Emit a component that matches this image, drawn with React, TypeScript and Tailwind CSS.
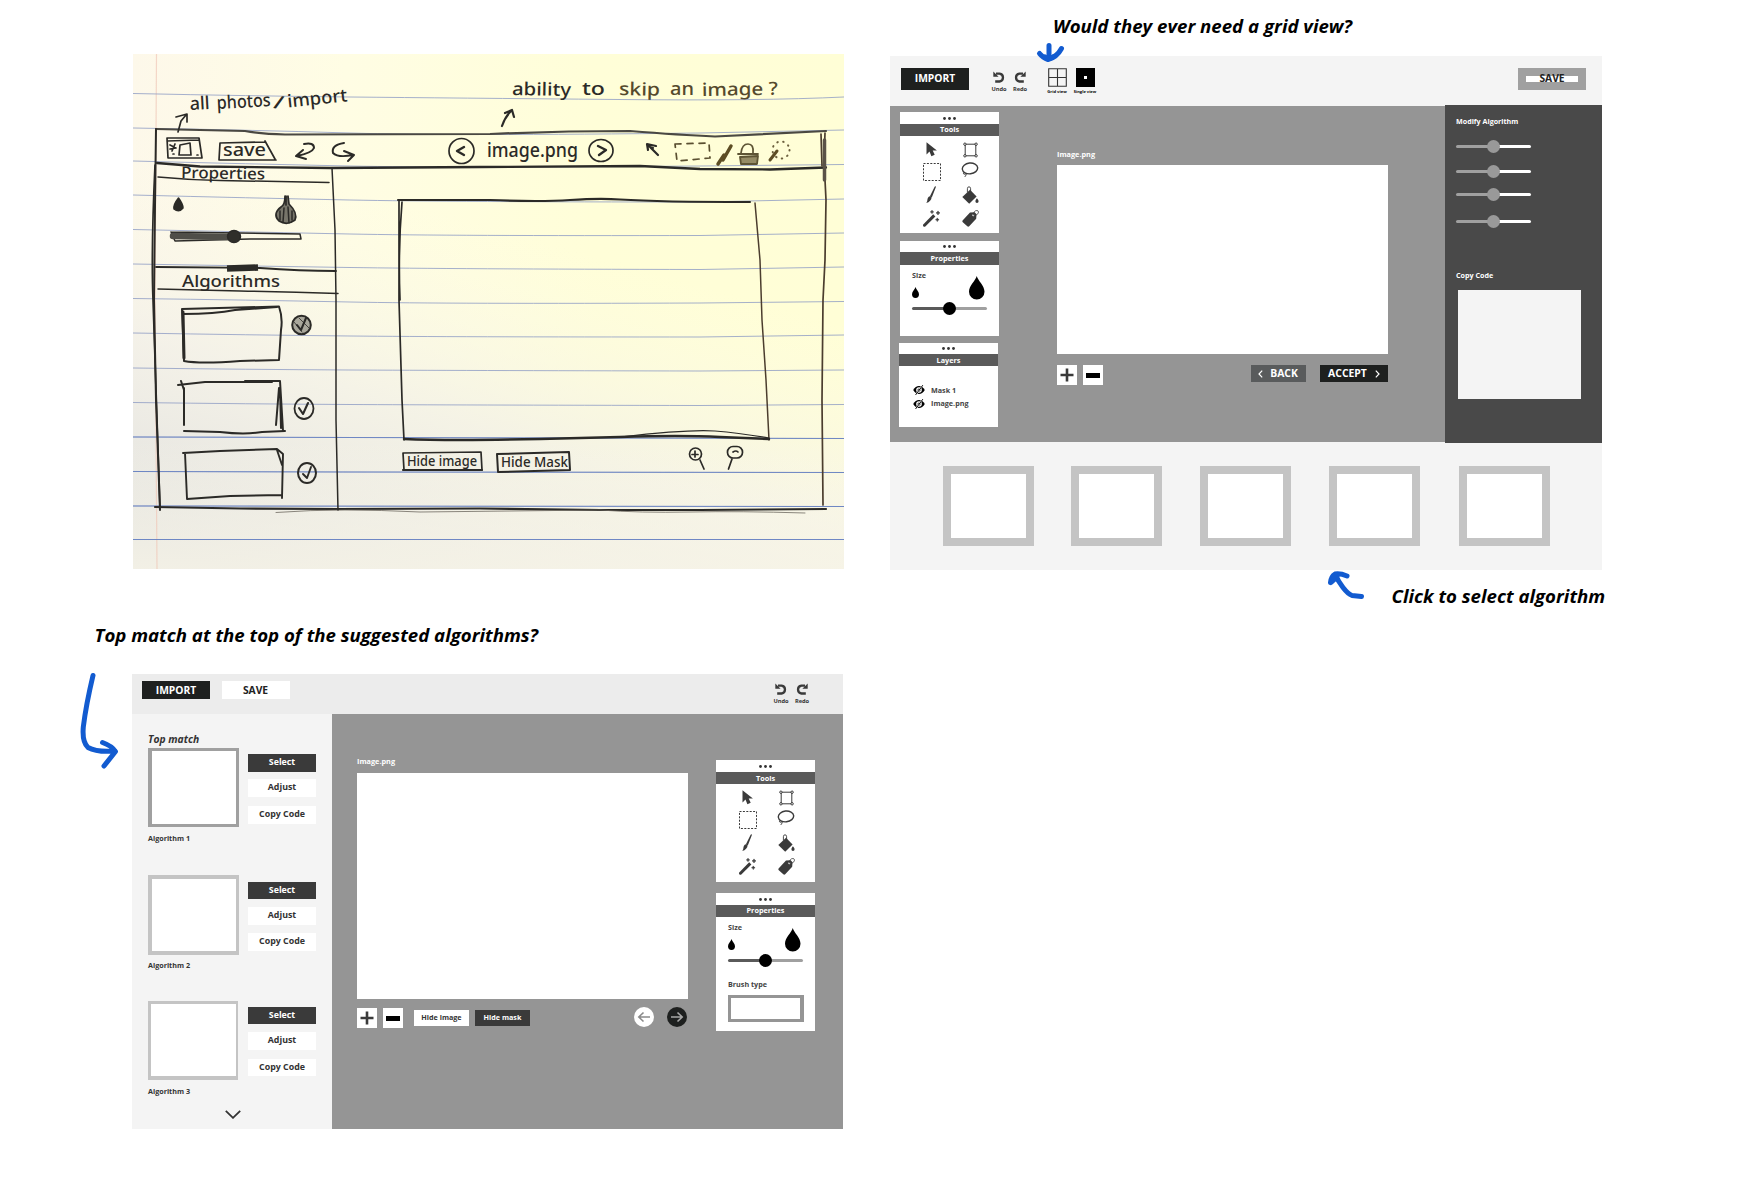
import type { ReactNode } from "react";

const BLUE = "#125bd0";

/* ---------- icons ---------- */

function Undo({ flip = false }: { flip?: boolean }) {
  return (
    <svg viewBox="0 0 12 12" className={flip ? "h-3 w-3 -scale-x-100" : "h-3 w-3"} fill="none">
      <path d="M2.200 10.500H6.600A4 4 0 0 0 6.600 2.600H3" stroke="#3a3a3a" strokeWidth="2.300" />
      <path d="M.3 .5v5.200h5.300z" fill="#3a3a3a" />
    </svg>
  );
}

function CursorIcon() {
  return (
    <svg viewBox="0 0 11 15" className="h-[15px] w-[11px]">
      <path d="M.5.2v12.200l3-2.800 1.900 4.600 3.300-1.500-2-4.100h4.200z" fill="#3a3a3a" />
    </svg>
  );
}

function TransformIcon() {
  return (
    <svg viewBox="0 0 15 16" className="h-4 w-[15px]" fill="none" stroke="#3a3a3a" strokeWidth="1">
      <path d="M3 2.200h9M3 13.800h9M2.200 3v10M12.800 3v10" />
      <circle cx="1.900" cy="2.200" r="1.200" />
      <circle cx="13.100" cy="2.200" r="1.200" />
      <circle cx="1.900" cy="13.800" r="1.200" />
      <circle cx="13.100" cy="13.800" r="1.200" />
    </svg>
  );
}

function MarqueeIcon() {
  return (
    <svg viewBox="0 0 18 18" className="h-[18px] w-[18px]">
      <rect x=".5" y=".5" width="17" height="17" fill="none" stroke="#3a3a3a" strokeWidth="1" strokeDasharray="2 1.400" />
    </svg>
  );
}

function LassoIcon() {
  return (
    <svg viewBox="0 0 18 16" className="h-4 w-[18px]" fill="none" stroke="#3a3a3a">
      <ellipse cx="9" cy="6.400" rx="7.700" ry="5.400" strokeWidth="1.400" transform="rotate(-6 9 6.400)" />
      <path d="M3.200 10.200c-1.400 1.200-.6 2.600 1 1.800 1.400-.6 1.400.6-.4 2.900" strokeWidth="1" />
    </svg>
  );
}

function BrushIcon() {
  return (
    <svg viewBox="0 0 10 17" className="h-[17px] w-[10px]" fill="#3a3a3a">
      <path d="M9.600.2c.4.2.3.8.1 1.300L5.800 11.400l-2-1L8.500.9c.3-.5.7-.9 1.100-.7z" />
      <path d="M3.300 10.200l2.300 1.200c-.1 2.400-2.200 4.600-5.300 5.600.9-1.200 1-2 1.100-3.200.1-1.300.8-3 1.900-3.600z" />
    </svg>
  );
}

function BucketIcon() {
  return (
    <svg viewBox="0 0 17 18" className="h-[18px] w-[17px]">
      <path d="M5.400 6.500V2.700a1.600 1.900 0 0 1 3.200 0V6" fill="none" stroke="#3a3a3a" strokeWidth=".9" />
      <path d="M8 3.800 14.600 10.600 7.200 17.800 .3 11z" fill="#3a3a3a" />
      <path d="M14.900 12.200c.8 1.200 1.700 2.100 1.700 3.100a1.600 1.600 0 0 1-3.200 0c0-1 .8-1.900 1.500-3.100z" fill="#3a3a3a" />
    </svg>
  );
}

function WandIcon() {
  return (
    <svg viewBox="0 0 17 17" className="h-[17px] w-[17px]" fill="#3a3a3a">
      <path d="M10.200 4.200 12.400 6.400 2.300 16.500C1 17.300-.6 15.900.2 14.400z" />
      <path d="M9 .2l.6 1.100 1.100.6-1.100.6L9 3.700l-.6-1.200-1.100-.6 1.100-.6zM15 .9l.7 1.300 1.300.7-1.300.7L15 5l-.7-1.400-1.300-.7 1.300-.7zM14.300 7.900l.6 1.200 1.200.6-1.200.6-.6 1.300-.6-1.300-1.200-.6 1.200-.6z" stroke="#3a3a3a" strokeWidth=".5" />
    </svg>
  );
}

function TagIcon() {
  return (
    <svg viewBox="0 0 17 17" className="h-[17px] w-[17px]">
      <path d="M8 2.500l4.700-.3 1.800 2-.3 4.500-7 7.600c-.6.6-1.300.6-1.900 0L.8 12.200c-.6-.6-.6-1.300 0-1.900z" fill="#3a3a3a" />
      <circle cx="11.300" cy="5.200" r="1" fill="#fff" />
      <path d="M11.400 5.100c-.3-2.700 1.600-4.700 3.500-4.600 1.800.1 2 2 .9 3.300-1 1.200-2.600 1.700-4.400 1.300z" fill="none" stroke="#3a3a3a" strokeWidth=".8" />
    </svg>
  );
}

function Drop({ className }: { className: string }) {
  return (
    <svg viewBox="0 0 16 24" preserveAspectRatio="none" className={className}>
      <path d="M8 0c1.200 4.800 8 9.800 8 16a8 8 0 0 1-16 0C0 9.800 6.800 4.800 8 0z" />
    </svg>
  );
}

function HiddenEye() {
  return (
    <svg viewBox="0 0 12 10" className="h-[10px] w-3" fill="none">
      <path d="M.2 5C1.800 2.300 3.700 1 6 1s4.200 1.300 5.800 4C10.200 7.700 8.300 9 6 9S1.800 7.700.2 5z" fill="#000" />
      <circle cx="6" cy="5" r="2.800" fill="#fff" />
      <circle cx="6" cy="5" r="1.500" fill="#000" />
      <path d="M9.200.6 3.200 9.200" stroke="#fff" strokeWidth="1.500" />
      <path d="M9.800.2 2.600 9.900" stroke="#000" strokeWidth="1" />
    </svg>
  );
}

function PlusIcon() {
  return (
    <svg viewBox="0 0 14 14" className="h-[14px] w-[14px]">
      <path d="M7 .5v13M.5 7h13" stroke="#3a3a3a" strokeWidth="2.600" />
    </svg>
  );
}

/* ---------- shared widgets ---------- */

function PanelHead({ title, dots, bar }: { title: string; dots: string; bar: string }) {
  return (
    <>
      <div className={`flex items-center justify-center ${dots}`}>
        <svg viewBox="0 0 13 3" className="h-[3px] w-[13px]" fill="#333">
          <circle cx="1.500" cy="1.500" r="1.400" />
          <circle cx="6.500" cy="1.500" r="1.400" />
          <circle cx="11.500" cy="1.500" r="1.400" />
        </svg>
      </div>
      <div className={`flex items-center justify-center bg-[#5a5a5a] text-[7.300px] leading-none text-white ${bar}`}>{title}</div>
    </>
  );
}

function Cell({ children }: { children: ReactNode }) {
  return <div className="flex items-center justify-center">{children}</div>;
}

function ToolsPanel({ className, bar }: { className: string; bar: string }) {
  return (
    <section className={`w-[99px] bg-white ${className}`}>
      <PanelHead title="Tools" dots="h-3" bar={bar} />
      <div className="grid grid-cols-[40px_38px] grid-rows-[23px_21px_25px_22px] pt-0.5 pl-[11px]">
        <Cell><CursorIcon /></Cell>
        <Cell><TransformIcon /></Cell>
        <Cell><div className="pl-0.5"><MarqueeIcon /></div></Cell>
        <Cell><div className="-mt-1 -ml-px"><LassoIcon /></div></Cell>
        <Cell><BrushIcon /></Cell>
        <Cell><BucketIcon /></Cell>
        <Cell><WandIcon /></Cell>
        <Cell><TagIcon /></Cell>
      </div>
    </section>
  );
}

function Slider({ left, right, knob }: { left: string; right: string; knob: string }) {
  return (
    <div className="relative flex h-[13px] w-[75px] items-center">
      <i className={`h-[3px] w-[37px] rounded-l-full ${left}`} />
      <i className={`h-[3px] w-[38px] rounded-r-full ${right}`} />
      <i className={`absolute left-[31px] size-[13px] rounded-full ${knob}`} />
    </div>
  );
}

function SizeControl() {
  return (
    <>
      <div className="flex h-8 w-[72.500px] items-start justify-between">
        <div className="flex flex-col">
          <span className="text-[7.200px] leading-[10px] text-[#444]">Size</span>
          <Drop className="mt-[7px] h-[11px] w-[7px]" />
        </div>
        <Drop className="mt-1.5 h-[23.500px] w-[15.500px]" />
      </div>
      <Slider left="bg-[#5a5a5a]" right="bg-[#a0a0a0]" knob="bg-black" />
    </>
  );
}

function Zoom() {
  return (
    <div className="flex gap-1.5">
      <div className="flex h-5 w-5 items-center justify-center bg-white"><PlusIcon /></div>
      <div className="flex h-5 w-[19.500px] items-center justify-center bg-white"><i className="h-[5px] w-[14px] bg-black" /></div>
    </div>
  );
}

function HistoryButtons() {
  return (
    <div className="flex gap-[5px] text-[5.700px] leading-[8px] text-[#333]">
      <div className="flex w-4 flex-col items-center gap-0.5"><Undo />Undo</div>
      <div className="flex w-4 flex-col items-center gap-0.5"><Undo flip />Redo</div>
    </div>
  );
}

/* ---------- board: pencil sketch on ruled paper ---------- */

const RULES = [
  "M133 93.500Q250 96 350 97T620 99.500Q760 101 844 97",
  "M133 128Q250 130 350 133T700 133L844 130",
  "M133 161Q250 164 350 166T700 166L844 164.500",
  "M133 195Q250 198 350 200T700 202L844 199",
  "M133 229.500Q250 232 350 234T700 235.500L844 233",
  "M133 264Q250 266 350 267.500T700 269.500L844 267",
  "M133 298.500Q250 300 350 302T700 303L844 301.500",
  "M133 333Q250 335 350 336T700 337L844 335",
  "M133 368Q250 369.500 350 370T700 371L844 370",
  "M133 402.500Q250 404 350 404.500T700 405.500L844 404.500",
  "M133 437L350 437.500 844 438.500",
  "M133 471.500L350 472 844 472.500",
  "M133 506L844 506.500",
  "M133 539.500L844 539.500",
];

function Hand({ x, y, w, s, r = 0, c = "#2b2a27", children }: { x: number; y: number; w: number; s: number; r?: number; c?: string; children: string }) {
  return (
    <text x={x} y={y} textLength={w} lengthAdjust="spacingAndGlyphs" fontSize={s} fill={c} stroke="none" transform={`rotate(${r} ${x} ${y})`}>
      {children}
    </text>
  );
}

function SketchBoard() {
  return (
    <svg viewBox="133 54 711 515" className="block h-[515px] w-[711px]" fill="none" strokeLinecap="round" strokeLinejoin="round" style={{ fontFamily: '"Noto Sans", sans-serif', fontWeight: 500 }}>
      <defs>
        <linearGradient id="paper" x1="0" y1="0" x2="1" y2="0">
          <stop offset="0" stopColor="#fdf8ea" />
          <stop offset=".3" stopColor="#fffde4" />
          <stop offset=".65" stopColor="#fffed8" />
          <stop offset="1" stopColor="#fffed6" />
        </linearGradient>
        <linearGradient id="shade" x1=".15" y1="1" x2=".42" y2=".3">
          <stop offset="0" stopColor="#e0e0dd" />
          <stop offset=".5" stopColor="#f1efe8" stopOpacity=".75" />
          <stop offset="1" stopColor="#fdfbe8" stopOpacity="0" />
        </linearGradient>
        <linearGradient id="foot" x1="0" y1="0" x2="0" y2="1">
          <stop offset=".75" stopColor="#fdfaec" stopOpacity="0" />
          <stop offset="1" stopColor="#f8f5e8" stopOpacity=".75" />
        </linearGradient>
      </defs>
      <rect x="133" y="54" width="711" height="515" fill="url(#paper)" />
      <rect x="133" y="54" width="711" height="515" fill="url(#shade)" />
      <rect x="133" y="54" width="711" height="515" fill="url(#foot)" />
      <path d="M156.500 54L155 300 157 569" stroke="#f0c8b8" strokeWidth="1.200" opacity=".7" />
      <g stroke="#8f9cc4" strokeWidth="1">{RULES.map((d) => <path key={d} d={d} opacity=".8" />)}</g>
      <g stroke="#5876c0" strokeWidth="1">{RULES.slice(10).map((d) => <path key={d} d={d} opacity=".7" />)}</g>

      {/* window frame */}
      <g stroke="#2b2a27" strokeWidth="1.700">
        <path d="M156 129L200 130 245 131Q262 134 285 134.500L490 134Q560 131 630 131Q680 135 715 136.500Q770 134 826 131" stroke="#4a4842" strokeWidth="2.200" />
        <path d="M156 129L155 205 154 300 156 400 160 510" strokeWidth="2" />
        <path d="M155 165Q151 250 153 300T160 508" />
        <path d="M157 163L200 166.500 330 168 480 167 640 166 700 169 770 169.500 826 167.500" strokeWidth="2.300" />
        <path d="M821 134L822 166M825 133L824 160 826 200 825 260 823 300 822 400 823 505" stroke="#4b3d2e" />
        <path d="M824.500 140L824.500 180" stroke="#5a5247" strokeWidth="3.500" />
        <path d="M155 507L240 508.500 338 509 480 508.500 600 510 700 510 826 509" strokeWidth="2.200" />
        <path d="M276 512.500Q310 510 345 510T420 512L600 510Q640 513 690 512T805 513" stroke="#6e6960" strokeWidth="1" opacity=".8" />
      </g>

      {/* sidebar */}
      <g stroke="#2b2a27" strokeWidth="1.500">
        <path d="M332 168L335 230 336 300 336 420 338 510" />
        <path d="M158 177Q190 180 220 180.500T329 182.500" />
        <path d="M156 267L260 268Q300 271 336 271" strokeWidth="1.800" />
        <path d="M158 289L240 291Q290 292 338 293.500" />
        <path d="M227 268.500L258 267.500" strokeWidth="6.500" strokeLinecap="butt" />
        <path d="M171 232L300 234 301 239 250 239 175 241 171 232" />
        <path d="M173 236L234 237" strokeWidth="6.500" stroke="#4f4e48" />
        <ellipse cx="234" cy="236.500" rx="6.500" ry="6" fill="#2f2e2a" />
        <path d="M178.500 198Q173 205 174 209Q179 213 183 208Q183 204 178.500 198z" fill="#2b2a27" />
        <path d="M286 196L286 205M288 196L289 204Q298 213 295 220Q287 226 279 221Q272 214 281 207Q285 205 285 196" strokeWidth="1.700" fill="#77756a" />
        <path d="M280 211L280 220M284 208L283 222M288 207L289 223M292 211L292 220" strokeWidth="1.500" />
        <path d="M182 309L279 306.500Q283 318 281 330L279 360 240 361Q200 364 184 361L182 309M183 314Q215 314 235 310L277 307" strokeWidth="2" />
        <path d="M183 312L184 358" strokeWidth="3" />
        <path d="M178 385L205 382 272 382M181 381L184 390M245 381L280 381 283 431M184 388L184 425M184 431L220 432Q245 435 262 432L285 431M279 388L276 425M280 388L281 428" strokeWidth="2" />
        <path d="M183 453L220 451 277 449 283 454 282 498M185 453L187 499 230 496 282 495M277 450L282 465" strokeWidth="1.900" />
        <circle cx="301.500" cy="325" r="9.300" fill="#aaa89c" strokeWidth="2" />
        <path d="M297 325L301 330 306 318" strokeWidth="2" />
        <path d="M294 322L302 332M299 318L309 328" strokeWidth=".8" />
        <ellipse cx="304" cy="408.500" rx="9.500" ry="10.500" strokeWidth="1.800" />
        <path d="M299 408L303 414 308 403" strokeWidth="2.100" />
        <ellipse cx="307" cy="473" rx="9" ry="10" strokeWidth="2" />
        <path d="M303 474L307 478 311 467" strokeWidth="1.900" />
      </g>

      {/* canvas */}
      <g stroke="#2b2a27" strokeWidth="1.700">
        <path d="M398 200L490 200Q540 202 570 200T620 199.500Q660 202 750 202" strokeWidth="2.100" />
        <path d="M399 201L399 300 402 400 404 440M402 202Q398 250 400 300" />
        <path d="M755 203L760 260 762 320 766 380 769 440" stroke="#4b3d2e" strokeWidth="1.500" />
        <path d="M404 439Q450 441 540 439L620 437Q680 435 720 437L769 439" strokeWidth="2.500" />
        <path d="M620 437Q690 429 715 431T769 438" strokeWidth="1.200" />
        <path d="M403 453L481 452 482 470 404 470z" />
        <path d="M403 470L482 470" strokeWidth="2.200" />
        <path d="M497 454L569 452 570 470 498 472z" strokeWidth="2" />
        <circle cx="695.500" cy="454" r="6" />
        <path d="M695 451V457M692 454.500H698M700 460L704 469" />
        <rect x="727.500" y="446.500" width="15" height="11.500" rx="5.500" />
        <path d="M733 452Q736 450 738 452M732 459L728.500 469" />
      </g>

      {/* toolbar */}
      <g stroke="#2b2a27" strokeWidth="1.700">
        <path d="M167 138L199 138 202 158 168 158z M167 141L199 140M180 145L190 143 191 155 179 155zM170 145L176 148 170 149M175 144L172 151M173 154h1M197 155h1" />
        <path d="M220 143L265 142M220 143L219 160 276 160M265 141L275 159" />
        <path d="M304 144Q314 142 314 148Q312 153 297 156M303 150L296 156 306 159" strokeWidth="2" />
        <path d="M344 143Q331 145 333 153Q338 158 353 155M344 151L354 155 348 161" strokeWidth="2" />
        <circle cx="461.500" cy="151" r="12.500" />
        <path d="M464 147L457 151 464 155" strokeWidth="2.400" />
        <ellipse cx="601" cy="150.500" rx="12" ry="11" />
        <path d="M598 146L606 150 599 155" strokeWidth="2.400" />
        <path d="M178 132L181 121 186 115M176 117L187 114 187 122" strokeWidth="1.700" />
        <path d="M502 126Q505 117 511 111M505 113L512 110 514 117" strokeWidth="2.200" />
        <path d="M648 145L658 155M648 150L647 144 656 146M650 147L653 148" strokeWidth="2.200" />
        <path d="M675 144L709 143 710 158 677 161z" stroke="#5a4f30" strokeWidth="1.700" strokeDasharray="6 6" />
        <path d="M731 146L723 160M718 164L724 155" stroke="#5d4d24" strokeWidth="3.500" />
        <path d="M738 154L758 154M740 157L758 156 757 164 741 164z" stroke="#5d5434" fill="#958c66" strokeWidth="1.800" />
        <path d="M741 153Q742 144 748 144T753 153" stroke="#5d5434" />
        <path d="M770 160L777 151" stroke="#5d4d24" strokeWidth="3" />
        <circle cx="781" cy="150" r="8.500" stroke="#6b5f3c" strokeWidth="2" strokeDasharray=".5 5.500" />
      </g>

      <Hand x={190} y={110} w={20} s={18} r={-3}>all</Hand>
      <Hand x={217} y={109} w={54} s={18} r={-3}>photos</Hand>
      <Hand x={273} y={108} w={10} s={18} r={8}>/</Hand>
      <Hand x={288} y={107.500} w={60} s={18} r={-6}>import</Hand>
      <Hand x={512} y={95} w={59} s={18} r={1}>ability</Hand>
      <Hand x={582} y={95} w={23} s={18}>to</Hand>
      <Hand x={619} y={95} w={41} s={18} r={1} c="#55492c">skip</Hand>
      <Hand x={670} y={95} w={24} s={18} c="#55492c">an</Hand>
      <Hand x={702} y={96} w={76} s={18} r={-1} c="#55492c">image ?</Hand>
      <Hand x={223} y={156} w={43} s={18}>save</Hand>
      <Hand x={181} y={178} w={84} s={16} r={1}>Properties</Hand>
      <Hand x={182} y={286.500} w={98} s={16}>Algorithms</Hand>
      <Hand x={487} y={157} w={91} s={19}>image.png</Hand>
      <Hand x={407} y={466} w={70} s={15}>Hide image</Hand>
      <Hand x={501} y={467} w={67} s={15}>Hide Mask</Hand>
    </svg>
  );
}

/* ---------- board: horizontal algorithm strip ---------- */

function EditorBoard() {
  return (
    <div className="flex h-[514px] w-[712px] flex-col bg-[#f4f4f4]">
      <header className="flex h-[50px] shrink-0 items-start pt-3 pl-[11px]">
        <div className="flex h-[22px] w-[68px] items-center justify-center bg-[#1e201f] pb-px text-[10.300px] leading-none text-white">IMPORT</div>
        <div className="mt-[3px] ml-[22px]"><HistoryButtons /></div>
        <div className="ml-[17px] flex w-6 flex-col items-center text-[4.150px] leading-[6px] text-black">
          <svg viewBox="0 0 19 19" className="mb-[2px] size-[19px]"><path d="M.7.7h17.600v17.600H.7zM9.500.5v18M.5 9.500h18" fill="none" stroke="#333" strokeWidth="1.100" /></svg>
          <span className="whitespace-nowrap">Grid view</span>
        </div>
        <div className="ml-[4px] flex w-6 flex-col items-center text-[4.050px] leading-[6px] text-black">
          <div className="mb-[2px] flex size-[19px] items-center justify-center bg-black"><i className="size-[3px] bg-white" /></div>
          <span className="whitespace-nowrap">Single view</span>
        </div>
        <div className="mr-4 ml-auto flex h-[22px] w-[68px] items-center justify-center bg-[#a0a0a0]">
          <div className="flex h-1.5 w-[52px] items-center justify-center bg-white pb-px text-[10.300px] leading-none text-[#222]">SAVE</div>
        </div>
      </header>

      <main className="flex h-[336px] shrink-0 bg-[#959595]">
        <aside className="w-[157px] shrink-0 pt-1.5 pl-[10px]">
          <ToolsPanel className="h-[121px]" bar="h-3" />
          <section className="mt-2 h-[95px] w-[99px] bg-white">
            <PanelHead title="Properties" dots="h-[11px]" bar="h-[13px]" />
            <div className="flex flex-col pt-[5px] pl-3">
              <SizeControl />
            </div>
          </section>
          <section className="mt-[7px] -ml-px h-[84px] w-[99px] bg-white">
            <PanelHead title="Layers" dots="h-[11px]" bar="h-3 pt-px" />
            <div className="flex flex-col gap-[3px] pt-[19px] pl-[14px] text-[7.200px] leading-[10px] text-[#444]">
              <div className="flex items-center gap-1.5"><HiddenEye />Mask 1</div>
              <div className="flex items-center gap-1.5"><div className="translate-y-px"><HiddenEye /></div>Image.png</div>
            </div>
          </section>
        </aside>
        <section className="w-[398px] shrink-0 pt-[43px] pl-[10px]">
          <div className="h-4 text-[7.300px] leading-[10px] text-white">Image.png</div>
          <div className="h-[189px] w-[331px] bg-white" />
          <div className="mt-[11px] flex w-[331px] items-start">
            <Zoom />
            <div className="ml-auto flex h-[17px] w-[55px] items-center justify-center gap-[7px] bg-[#595b5c] pr-px text-[10.400px] leading-none text-white">
              <svg viewBox="0 0 5 8" className="h-2 w-[5px]"><path d="M4.200.7 1 4l3.200 3.300" fill="none" stroke="#fff" strokeWidth="1.200" /></svg>
              BACK
            </div>
            <div className="ml-[14px] flex h-[17px] w-[68px] items-center justify-center gap-2 bg-[#1e201f] text-[10.400px] leading-none text-white">
              ACCEPT
              <svg viewBox="0 0 5 8" className="h-2 w-[5px]"><path d="M.8.7 4 4 .8 7.300" fill="none" stroke="#fff" strokeWidth="1.200" /></svg>
            </div>
          </div>
        </section>
        <aside className="-my-px flex w-[157px] shrink-0 flex-col bg-[#494949] pt-[11px] pl-[11px] text-[7.150px] leading-[10px] text-white">
          Modify Algorithm
          <div className="mt-[14px] flex flex-col">
            <Slider left="bg-[#a0a0a0]" right="bg-white" knob="bg-[#999]" />
            <div className="mt-[11.500px]"><Slider left="bg-[#a0a0a0]" right="bg-white" knob="bg-[#999]" /></div>
            <div className="mt-[10.500px]"><Slider left="bg-[#a0a0a0]" right="bg-white" knob="bg-[#999]" /></div>
            <div className="mt-[14px]"><Slider left="bg-[#a0a0a0]" right="bg-white" knob="bg-[#999]" /></div>
          </div>
          <span className="mt-[42px]">Copy Code</span>
          <div className="mt-[10px] ml-0.5 h-[109px] w-[123px] bg-[#f4f4f4]" />
        </aside>
      </main>

      <footer className="flex gap-[38px] pt-6 pl-[53px]">
        {["", "-ml-px", "", "", "ml-px"].map((nudge, n) => (
          <div key={n} className={`h-20 w-[91px] border-8 border-[#c4c4c4] bg-white ${nudge}`} />
        ))}
      </footer>
    </div>
  );
}

/* ---------- board: vertical suggestions ---------- */

function Suggestion({ name, frame, offsets }: { name: string; frame: string; offsets: [string, string, string, string] }) {
  const [top, second, third, label] = offsets;
  return (
    <article className="flex flex-col text-[#333]">
      <div className="flex h-20 items-start">
        <div className="w-[91px]">
          <div className={`bg-white ${frame}`} />
        </div>
        <div className="ml-[9px] flex w-[68px] flex-col text-[8.850px] leading-none">
          <div className={`flex items-center justify-center bg-[#3a3a3a] pb-px text-white ${top}`}>Select</div>
          <div className={`flex h-[18px] items-center justify-center bg-white pb-0.5 ${second}`}>Adjust</div>
          <div className={`flex items-center justify-center bg-white ${third}`}>Copy Code</div>
        </div>
      </div>
      <span className={`text-[7.200px] leading-[10px] ${label}`}>{name}</span>
    </article>
  );
}

function SuggestionBoard() {
  return (
    <div className="flex h-[455px] w-[711px] flex-col bg-[#f4f4f4]">
      <header className="flex h-10 shrink-0 items-start bg-[#ececec] pt-[7px] pl-[10px] text-[10.300px] leading-none">
        <div className="flex h-[18px] w-[68px] items-center justify-center bg-[#1e201f] text-white">IMPORT</div>
        <div className="ml-3 flex h-[18px] w-[68px] items-center justify-center bg-white pr-px text-[#222]">SAVE</div>
        <div className="mt-0.5 mr-[33px] ml-auto"><HistoryButtons /></div>
      </header>
      <div className="flex h-[415px] shrink-0">
        <aside className="flex w-[200px] shrink-0 flex-col bg-[#f4f4f4] pt-[18px] pl-4">
          <span className="h-4 text-[10.300px] leading-[14px] text-[#333] italic">Top match</span>
          <Suggestion name="Algorithm 1" frame="h-[79px] w-[91px] border-4 border-t-[3px] border-r-[3px] border-b-[3px] border-[#a0a0a0]" offsets={["mt-1.5 h-[18px]", "mt-[7px]", "mt-[9px] h-[18px] pb-0.5", "mt-[4.500px]"]} />
          <div className="mt-[32.500px]" />
          <Suggestion name="Algorithm 2" frame="h-20 w-[91px] border-4 border-r-[3px] border-[#c4c4c4]" offsets={["mt-[7px] h-[17px]", "mt-2", "mt-2 h-[18px] pb-0.5", "mt-[4.500px]"]} />
          <div className="mt-[31.500px]" />
          <Suggestion name="Algorithm 3" frame="h-[79px] w-[90px] border-3 border-r-2 border-b-4 border-[#c4c4c4]" offsets={["mt-1.5 h-[17px]", "mt-2", "mt-[9px] h-[17px] pb-px", "mt-[5px]"]} />
          <svg viewBox="0 0 16 9" className="mt-[14px] ml-[77px] h-[9px] w-4"><path d="M.8.8 8 7.800 15.200.8" fill="none" stroke="#333" strokeWidth="1.800" /></svg>
        </aside>
        <main className="flex w-[511px] shrink-0 items-start bg-[#959595]">
          <section className="ml-[25px] w-[331px] shrink-0 pt-[42px]">
            <div className="h-[17px] text-[7.300px] leading-[10px] text-white">Image.png</div>
            <div className="h-[226px] w-[331px] bg-white" />
            <div className="flex items-start pt-2">
              <div className="mt-px"><Zoom /></div>
              <div className="mt-[3px] ml-[11.500px] flex h-4 w-[55px] items-center justify-center bg-white pb-px text-[7.200px] leading-none text-[#333]">Hide image</div>
              <div className="mt-[3px] ml-1.5 flex h-4 w-[55px] items-center justify-center bg-[#3a3a3a] pb-px text-[7.200px] leading-none text-white">Hide mask</div>
              <svg viewBox="0 0 20 20" className="ml-auto size-5"><circle cx="10" cy="10" r="10" fill="#fff" /><path d="M16 10H5M9.500 5.500 4.800 10l4.700 4.500" fill="none" stroke="#8a8a8a" strokeWidth="1.600" /></svg>
              <svg viewBox="0 0 20 20" className="mr-px ml-[13px] size-5"><circle cx="10" cy="10" r="10" fill="#1e201f" /><path d="M4 10h11M10.500 5.500 15.200 10l-4.700 4.500" fill="none" stroke="#a8a8a8" strokeWidth="1.600" /></svg>
            </div>
          </section>
          <aside className="ml-7 pt-[46px]">
            <ToolsPanel className="h-[122px]" bar="h-3 pt-px" />
            <section className="mt-[11px] h-[138px] w-[99px] bg-white">
              <PanelHead title="Properties" dots="h-3" bar="h-3" />
              <div className="flex flex-col pt-[5px] pl-3">
                <SizeControl />
                <span className="mt-[12px] text-[7.200px] leading-[10px] text-[#444]">Brush type</span>
                <div className="mt-[6px] h-[27px] w-[76px] border-3 border-r-4 border-[#959595] bg-white" />
              </div>
            </section>
          </aside>
        </main>
      </div>
    </div>
  );
}

/* ---------- canvas with boards and notes ---------- */

function Note({ className, children }: { className: string; children: string }) {
  return <p className={`absolute leading-6 whitespace-nowrap text-black italic ${className}`}>{children}</p>;
}

export default function App() {
  return (
    <div className="relative h-[1204px] w-[1748px] overflow-hidden bg-white font-bold" style={{ fontFamily: '"Open Sans", sans-serif' }}>
      <div className="absolute top-[54px] left-[133px]"><SketchBoard /></div>
      <div className="absolute top-[56px] left-[890px]"><EditorBoard /></div>
      <div className="absolute top-[674px] left-[132px]"><SuggestionBoard /></div>

      <Note className="top-[14px] left-[1053px] text-[18.650px]">Would they ever need a grid view?</Note>
      <Note className="top-[584px] left-[1391.500px] text-[18.650px]">Click to select algorithm</Note>
      <Note className="top-[623px] left-[94.500px] text-[18.640px]">Top match at the top of the suggested algorithms?</Note>

      <svg viewBox="0 0 30 22" className="absolute top-[42px] left-[1035px] h-[22px] w-[30px]" fill="none" stroke={BLUE} strokeWidth="5" strokeLinecap="round" strokeLinejoin="round">
        <path d="M14 3.500V16M4.500 11.500Q8 16 13 17.500Q22 15 26.500 6.500" />
        <path d="M10 15Q14 18 18 15" />
      </svg>
      <svg viewBox="0 0 40 32" className="absolute top-[569px] left-[1326px] h-8 w-10" fill="none" stroke={BLUE} strokeWidth="5" strokeLinecap="round" strokeLinejoin="round">
        <path d="M4.500 13.500Q5 7.500 9 5Q14 4 21 7M9.500 6Q12 12 17 18.500T26 26.500L35.500 27.500M5 13.500L11 8" />
      </svg>
      <svg viewBox="0 0 42 102" className="absolute top-[670px] left-[78px] h-[102px] w-[42px]" fill="none" stroke={BLUE} strokeWidth="5" strokeLinecap="round" strokeLinejoin="round">
        <path d="M15 5.500Q8 35 5.300 57Q4 72 10 77.500Q19 82.500 37 81M24.500 72.500Q34 76 37.500 81.500L26 96" />
      </svg>
    </div>
  );
}
